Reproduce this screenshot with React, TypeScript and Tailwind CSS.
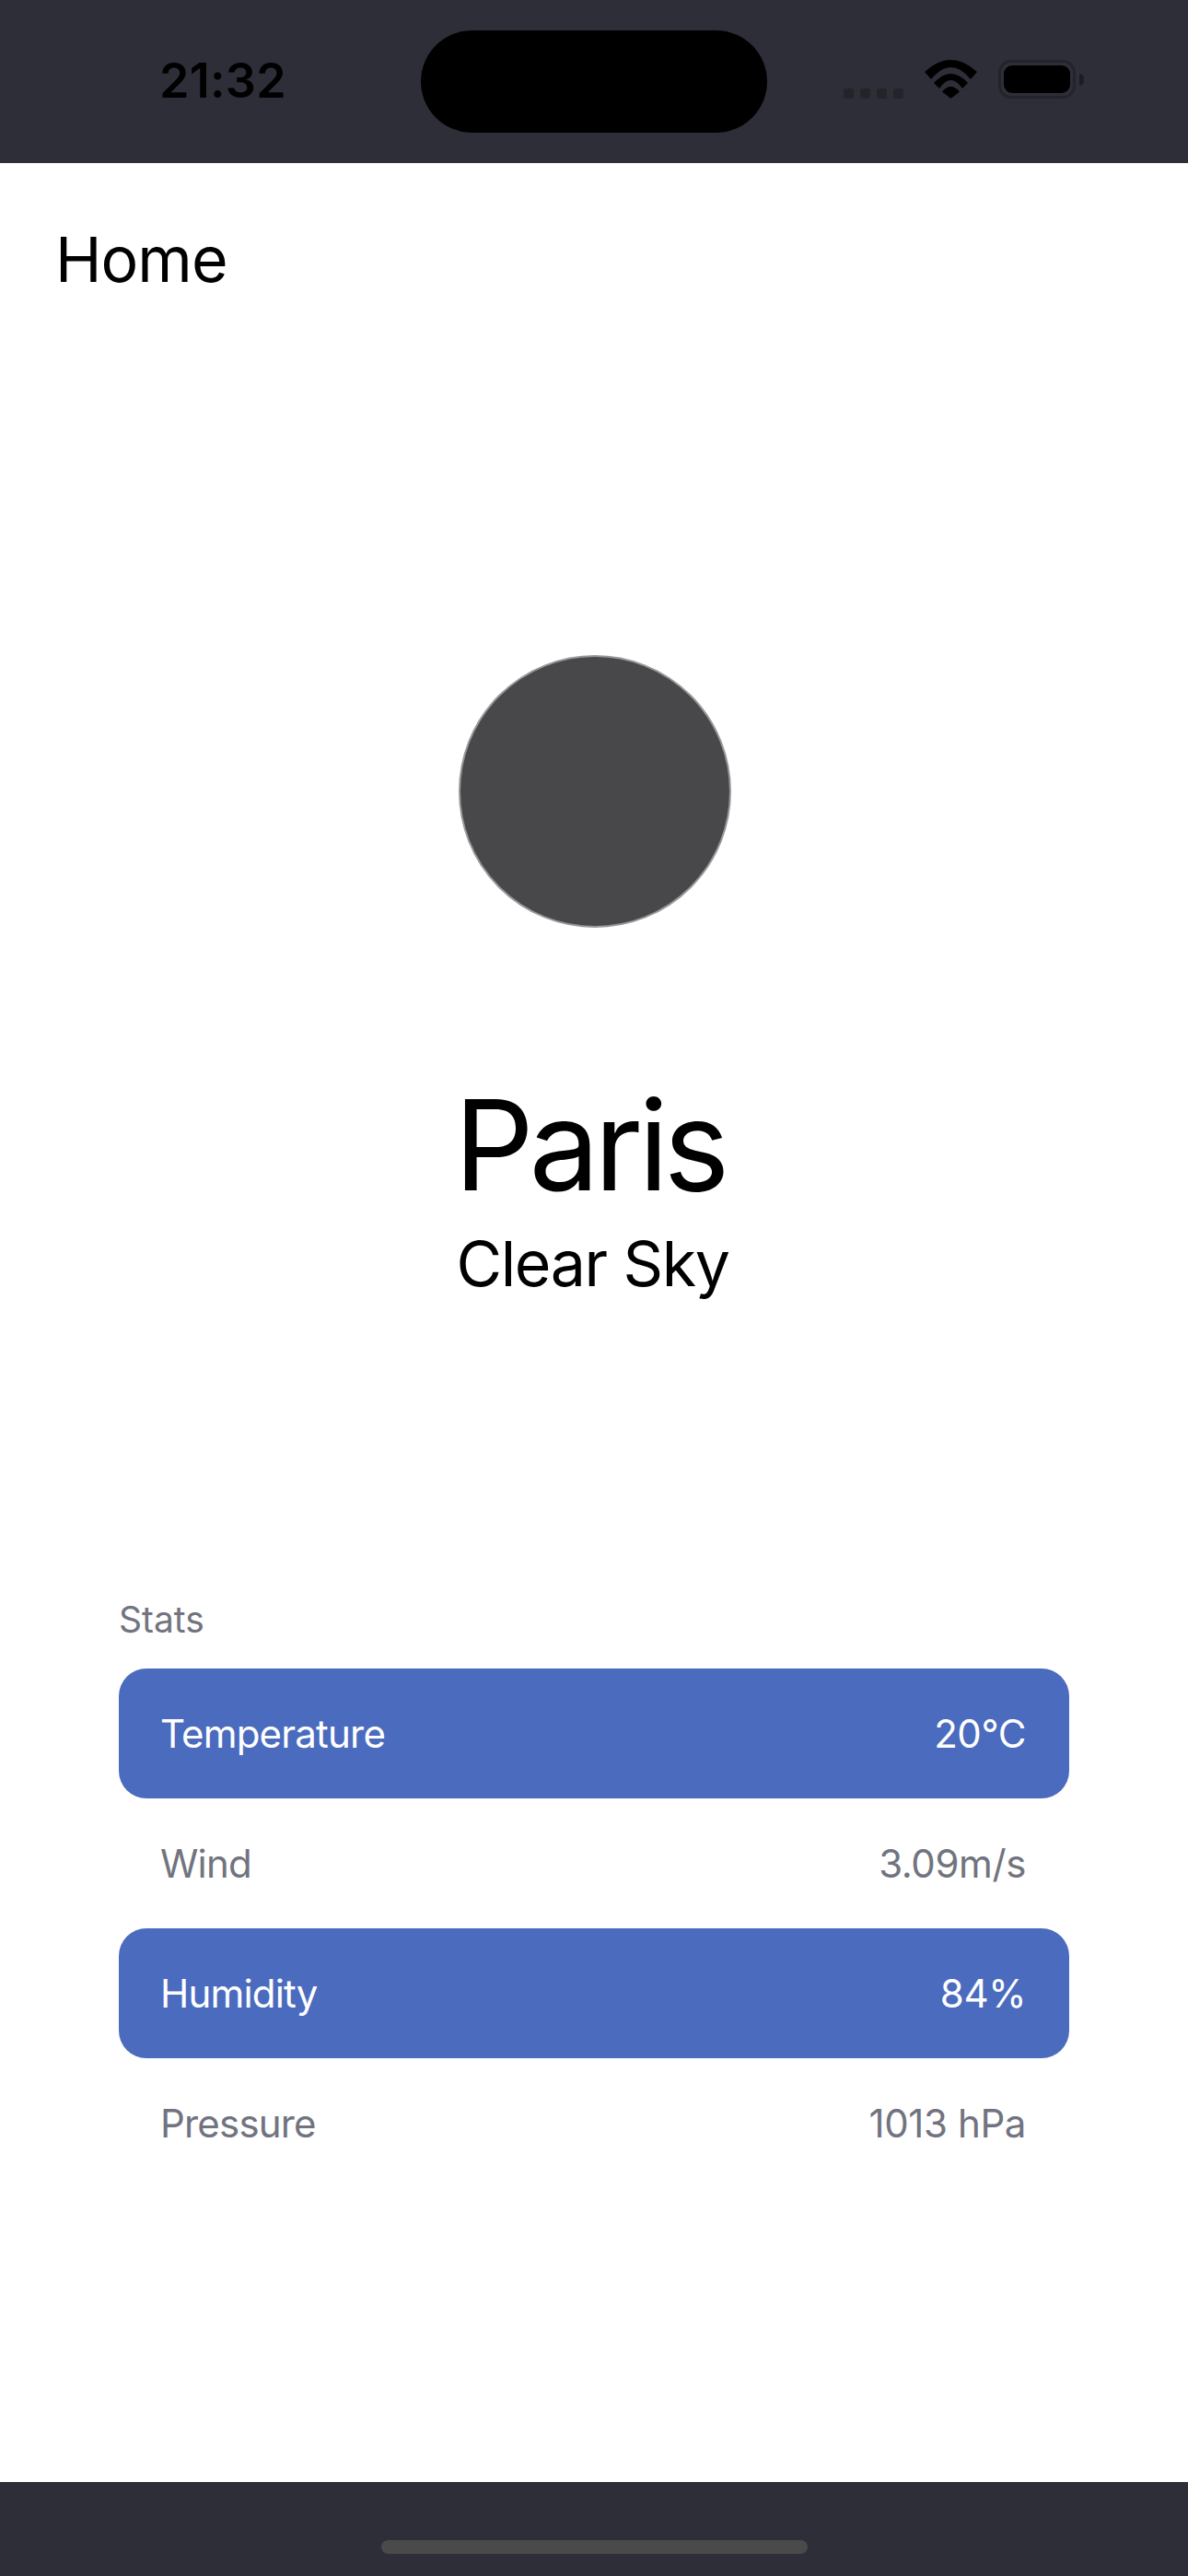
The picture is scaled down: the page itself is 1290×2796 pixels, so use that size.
const rows = [
  { label: "Temperature", value: "20°C", on: true },
  { label: "Wind", value: "3.09m/s", on: false },
  { label: "Humidity", value: "84%", on: true },
  { label: "Pressure", value: "1013 hPa", on: false },
];

function StatusIcons() {
  return (
    <div className="flex items-end h-[42px]">
      <div className="flex gap-[7px]">
        {[0, 1, 2, 3].map((i) => (
          <div key={i} className="w-[11px] h-[11px] rounded-[3px] bg-[#232329]" />
        ))}
      </div>
      <svg className="ml-[23px]" width="57" height="42" viewBox="0 0 57 42">
        <path d="M28.5 42 L19 34.5 Q28.5 23.5 38 34.5 Z" fill="#000" />
        <path d="M10 25 Q28.5 5 47 25 L41 31 Q28.5 13 16 31 Z" fill="#000" />
        <path d="M0 13 Q28.5 -13 57 13 L50 21 Q28.5 -5 7 21 Z" fill="#000" />
      </svg>
      <div className="ml-[23px] w-[84px] h-[42px] rounded-[14px] border-[3px] border-[#23232a] p-[3px]">
        <div className="w-full h-full rounded-[9px] bg-black" />
      </div>
      <div className="ml-[4px] mb-[14px] w-[5px] h-[13px] rounded-r-[5px] bg-[#1c1c22]" />
    </div>
  );
}

export default function App() {
  return (
    <div className="w-[1290px] h-[2796px] flex flex-col bg-white font-['Inter',sans-serif]">
      <header className="h-[177px] shrink-0 bg-[#2e2e38] flex">
        <div className="w-[457px] pl-[173px] pt-[58px] text-[52px] leading-[60px] font-semibold text-black tracking-[0.3px]">
          21:32
        </div>
        <div className="mt-[33px] w-[376px] h-[111px] rounded-[56px] bg-black" />
        <div className="ml-[83px] pt-[65px]">
          <StatusIcons />
        </div>
      </header>

      <main className="flex-1 flex flex-col">
        <h1 className="pl-[60px] pt-[64px] text-[68px] leading-[80px] font-normal text-black tracking-[-1px]">Home</h1>

        <div className="mt-[390px] ml-[498px] w-[296px] h-[296px] rounded-full bg-[#48484a] border-2 border-[#98989c]" />

        <div className="mt-[156px] pr-[10px] text-center text-[136px] leading-[160px] text-black tracking-[-5.5px]">Paris</div>
        <div className="mt-[8px] pr-[3px] text-center text-[68px] leading-[80px] text-black tracking-[-1.4px]">Clear Sky</div>

        <section className="mt-[324px] mx-[129px]">
          <div className="text-[39px] leading-[46px] text-[#71747f]">Stats</div>
          <div className="mt-[30px] flex flex-col">
            {rows.map((r) => (
              <div
                key={r.label}
                className={`h-[141px] pl-[45px] pr-[47px] flex items-center justify-between rounded-[30px] text-[42px] ${
                  r.on ? "bg-[#4b6bbf] text-white" : "text-[#71747f]"
                }`}
              >
                <span className="tracking-[-0.8px]">{r.label}</span>
                <span className="tracking-[-0.4px]">{r.value}</span>
              </div>
            ))}
          </div>
        </section>
      </main>

      <footer className="h-[102px] shrink-0 bg-[#2e2e38] flex justify-center pt-[63px]">
        <div className="w-[463px] h-[15px] rounded-full bg-[#4a4a4a]" />
      </footer>
    </div>
  );
}
